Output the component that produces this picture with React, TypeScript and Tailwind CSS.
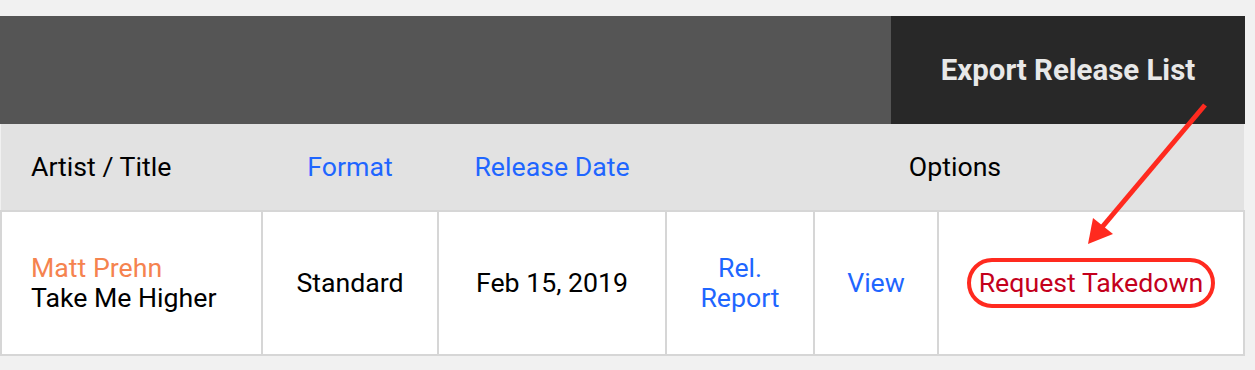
import React from 'react';

type Release = {
  artist: string;
  title: string;
  format: string;
  releaseDate: string;
};

const releases: Release[] = [
  { artist: 'Matt Prehn', title: 'Take Me Higher', format: 'Standard', releaseDate: 'Feb 15, 2019' },
];

const cellClass = 'border-2 border-[#d6d6d6] bg-white text-center align-middle';

const App: React.FC = () => {
  return (
    <div className="min-h-[370px] w-[1255px] bg-[#f1f1f1] pt-4 font-['Roboto',sans-serif] text-[26.7px] leading-[30px] text-black">
      <div className="relative w-[1245px]">
        {/* toolbar */}
        <div className="flex h-[108px]">
          <div className="flex-1 bg-[#555555]" />
          <button className="w-[354px] bg-[#282828] text-[29.4px] font-bold text-[#e8e8e8]">Export Release List</button>
        </div>

        {/* release list */}
        <table className="w-full table-fixed border-collapse">
          <colgroup>
            <col className="w-[261px]" />
            <col className="w-[176px]" />
            <col className="w-[228px]" />
            <col className="w-[148px]" />
            <col className="w-[124px]" />
            <col />
          </colgroup>
          <thead>
            <tr className="h-[87px] bg-[#e2e2e2]">
              <th className="pl-[30px] text-left font-normal">Artist / Title</th>
              <th className="font-normal text-[#1f66ff]">Format</th>
              <th className="font-normal text-[#1f66ff]">Release Date</th>
              <th colSpan={3} className="font-normal">Options</th>
            </tr>
          </thead>
          <tbody>
            {releases.map((r) => (
              <tr key={r.title} className="h-[144px]">
                <td className={`${cellClass} pl-[29px] text-left`}>
                  <div className="text-[#f5834f]">{r.artist}</div>
                  <div>{r.title}</div>
                </td>
                <td className={cellClass}>{r.format}</td>
                <td className={cellClass}>{r.releaseDate}</td>
                <td className={`${cellClass} text-[#1f66ff]`}>
                  Rel.
                  <br />
                  Report
                </td>
                <td className={`${cellClass} text-[#1f66ff]`}>View</td>
                <td className={cellClass}>
                  <span className="inline-block rounded-full border-4 border-[#ff2a1f] px-2 py-[6px] text-[#c4001c]">
                    Request Takedown
                  </span>
                </td>
              </tr>
            ))}
          </tbody>
        </table>

        {/* annotation arrow */}
        <svg className="pointer-events-none absolute left-0 top-0" width="1255" height="370">
          <line x1="1205" y1="89" x2="1098" y2="216" stroke="#ff2a1f" strokeWidth="5" />
          <polygon points="1088,228 1113,218 1093,202" fill="#ff2a1f" />
        </svg>
      </div>
    </div>
  );
};

export default App;
